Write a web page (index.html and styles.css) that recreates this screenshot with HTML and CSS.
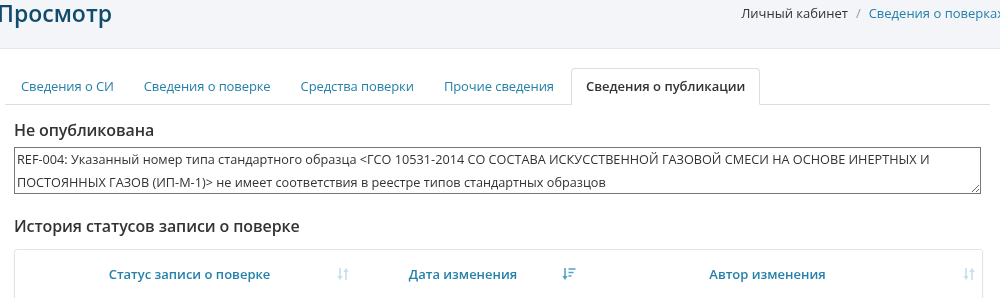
FILE: index.html
```html
<!DOCTYPE html>
<html lang="ru">
<head>
    <meta charset="UTF-8">
    <title>Просмотр</title>
    <link rel="stylesheet" href="styles.css">
</head>
<body>
    <div class="page-header">
        <h1 class="page-title">Просмотр</h1>
        <div class="breadcrumbs">
            <span class="crumb">Личный кабинет</span>
            <span class="crumb-sep">/</span>
            <a class="crumb-link" href="#">Сведения о поверках</a>
        </div>
    </div>

    <div class="content">
        <ul class="tabs">
            <li><a href="#">Сведения о СИ</a></li>
            <li><a href="#">Сведения о поверке</a></li>
            <li><a href="#">Средства поверки</a></li>
            <li><a href="#">Прочие сведения</a></li>
            <li class="active"><a href="#">Сведения о публикации</a></li>
        </ul>

        <div class="tab-pane">
            <h3 class="section-title">Не опубликована</h3>
            <textarea class="message" readonly>REF-004: Указанный номер типа стандартного образца &lt;ГСО 10531-2014 СО СОСТАВА ИСКУССТВЕННОЙ ГАЗОВОЙ СМЕСИ НА ОСНОВЕ ИНЕРТНЫХ И ПОСТОЯННЫХ ГАЗОВ (ИП-М-1)&gt; не имеет соответствия в реестре типов стандартных образцов</textarea>

            <h3 class="section-title history-title">История статусов записи о поверке</h3>
            <div class="table-card">
                <div class="table-head">
                    <div class="th col-status">
                        <span class="th-label">Статус записи о поверке</span>
                        <svg class="sort sort-both" width="12" height="14" viewBox="0 0 12 14">
                            <path d="M3 1v9" stroke="currentColor" stroke-width="1.6"/>
                            <path d="M0.3 9 L3 13 L5.7 9 Z" fill="currentColor"/>
                            <path d="M9 13V4" stroke="currentColor" stroke-width="1.6"/>
                            <path d="M6.3 5 L9 1 L11.7 5 Z" fill="currentColor"/>
                        </svg>
                    </div>
                    <div class="th col-date">
                        <span class="th-label">Дата изменения</span>
                        <svg class="sort sort-desc" width="14" height="14" viewBox="0 0 14 14">
                            <path d="M3 1v9" stroke="currentColor" stroke-width="1.6"/>
                            <path d="M0.3 9 L3 13 L5.7 9 Z" fill="currentColor"/>
                            <path d="M6.5 2h7M6.5 5.5h5M6.5 9h3" stroke="currentColor" stroke-width="1.6"/>
                        </svg>
                    </div>
                    <div class="th col-author">
                        <span class="th-label">Автор изменения</span>
                        <svg class="sort sort-both" width="12" height="14" viewBox="0 0 12 14">
                            <path d="M3 1v9" stroke="currentColor" stroke-width="1.6"/>
                            <path d="M0.3 9 L3 13 L5.7 9 Z" fill="currentColor"/>
                            <path d="M9 13V4" stroke="currentColor" stroke-width="1.6"/>
                            <path d="M6.3 5 L9 1 L11.7 5 Z" fill="currentColor"/>
                        </svg>
                    </div>
                </div>
            </div>
        </div>
    </div>
</body>
</html>
```

FILE: styles.css
```css
body {
    font-family: "Open Sans", "Noto Sans", sans-serif;
    margin: 0;
    padding: 0;
    background-color: #fff;
    color: #333;
    overflow: hidden;
}
a {
    text-decoration: none;
}
.page-header {
    display: flex;
    justify-content: space-between;
    align-items: flex-start;
    height: 48px;
    background-color: #f4f5f8;
    border-bottom: 1px solid #e5e7eb;
    margin: 0 -4px 0 -3px;
}
.page-title {
    margin: -2px 0 0 0;
    font-size: 23px;
    font-weight: 600;
    line-height: 30px;
    color: #0f4d6b;
}
.breadcrumbs {
    display: flex;
    gap: 8px;
    font-size: 13px;
    line-height: 26px;
    white-space: nowrap;
}
.crumb {
    color: #333;
}
.crumb-sep {
    color: #999;
}
.crumb-link {
    color: #2580aa;
}
.content {
    padding: 19px 10px 0 5px;
}
.tabs {
    display: flex;
    list-style: none;
    margin: 0;
    padding: 0 0 0 2px;
    border-bottom: 1px solid #ddd;
}
.tabs li {
    margin: 0 2px -1px 0;
}
.tabs a {
    display: block;
    padding: 10px 13px;
    font-size: 13px;
    line-height: 15px;
    letter-spacing: -0.1px;
    color: #2580aa;
    border: 1px solid transparent;
    border-radius: 4px 4px 0 0;
}
.tabs .active a {
    padding: 10px 14px;
    margin-left: 1px;
    letter-spacing: 0;
    color: #333;
    font-weight: 600;
    background-color: #fff;
    border-color: #ddd;
    border-bottom-color: #fff;
}
.tab-pane {
    padding: 0 10px 0 9px;
}
.section-title {
    margin: 14px 0 6px 0;
    font-size: 16px;
    font-weight: 600;
    line-height: 22px;
    letter-spacing: -0.1px;
    color: #333;
}
.message {
    display: block;
    box-sizing: border-box;
    width: 967px;
    height: 47px;
    padding: 0 2px;
    font-family: "Open Sans", "Noto Sans", sans-serif;
    font-size: 12.7px;
    line-height: 23px;
    color: #333;
    border: 1px solid #767676;
    resize: vertical;
}
.history-title {
    margin-top: 21px;
    margin-bottom: 12px;
}
.table-card {
    width: 967px;
    height: 60px;
    border: 1px solid #e3e3e3;
    border-radius: 3px;
    box-shadow: 0 1px 2px rgba(0, 0, 0, 0.05);
}
.table-head {
    display: flex;
    padding-top: 15px;
}
.th {
    display: flex;
    align-items: center;
    font-size: 13px;
    font-weight: 600;
    color: #2580aa;
}
.th-label {
    flex: 1;
    text-align: center;
}
.col-status {
    width: 342px;
    padding: 0 8px 0 27px;
    box-sizing: border-box;
}
.col-date {
    width: 227px;
    padding: 0 8px 0 7px;
    box-sizing: border-box;
}
.col-author {
    width: 398px;
    padding: 0 7px 0 8px;
    box-sizing: border-box;
}
.col-author .th-label {
    padding-right: 20px;
}
.sort {
    flex: none;
}
.sort-both {
    color: #c4dfee;
}
.sort-desc {
    color: #4fa3c7;
}
```
